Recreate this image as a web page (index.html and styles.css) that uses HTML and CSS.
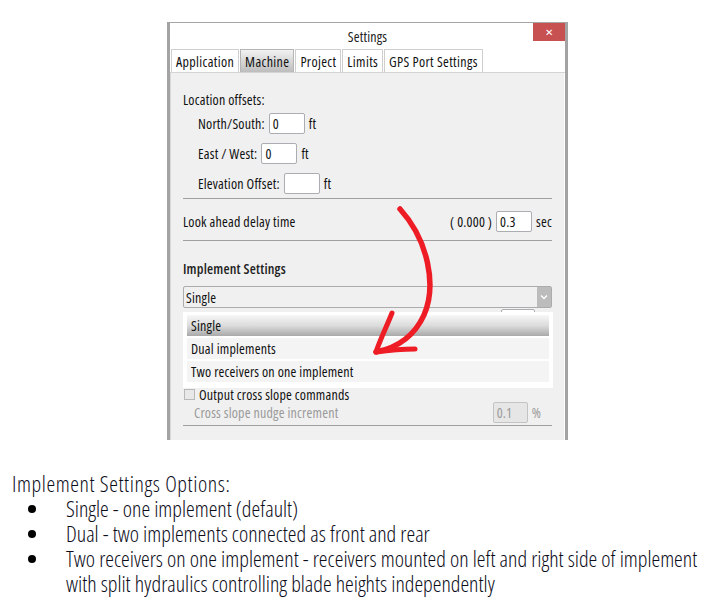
FILE: index.html
```html
<!DOCTYPE html>
<html>
<head>
<meta charset="utf-8">
<link rel="stylesheet" href="styles.css">
</head>
<body>
<div class="page">
  <div class="window">
    <div class="titlebar">
      <span class="title">Settings</span>
      <span class="close">✕</span>
    </div>
    <div class="tabs">
      <div class="tab">Application</div>
      <div class="tab active">Machine</div>
      <div class="tab">Project</div>
      <div class="tab">Limits</div>
      <div class="tab">GPS Port Settings</div>
    </div>
    <div class="panel">
      <div class="group-label">Location offsets:</div>
      <div class="field"><span>North/South:</span><span class="input">0</span><span>ft</span></div>
      <div class="field"><span>East / West:</span><span class="input">0</span><span>ft</span></div>
      <div class="field"><span>Elevation Offset:</span><span class="input"></span><span>ft</span></div>
      <div class="sep sep-1"></div>
      <div class="row lookahead">
        <span>Look ahead delay time</span>
        <span class="row-right"><span>( 0.000 )</span><span class="input">0.3</span><span>sec</span></span>
      </div>
      <div class="sep sep-2"></div>
      <div class="section-title">Implement Settings</div>
      <div class="select-wrap">
        <div class="select"><span>Single</span><span class="select-btn"><svg width="8" height="6" viewBox="0 0 8 6"><path d="M1 1.5 L4 4.5 L7 1.5" fill="none" stroke="#fff" stroke-width="1.4"/></svg></span></div>
        <div class="hidden-row"><span class="input hidden-input"></span></div>
        <ul class="dropdown">
          <li class="item selected">Single</li>
          <li class="item">Dual implements</li>
          <li class="item">Two receivers on one implement</li>
        </ul>
      </div>
      <div class="check-row"><span class="checkbox"></span><span>Output cross slope commands</span></div>
      <div class="row disabled">
        <span class="nudge-label">Cross slope nudge increment</span>
        <span class="row-right nudge-right"><span class="input disabled-input">0.1</span><span>%</span></span>
      </div>
      <div class="sep sep-3"></div>
    </div>
  </div>
  <svg class="annotation" width="704" height="613" viewBox="0 0 704 613">
    <path d="M400 209 C 428 240 437 285 424 315 C 414 337 396 348 376 352" fill="none" stroke="#ee1c24" stroke-width="5.5" stroke-linecap="round"/>
    <path d="M392 313 C 386 328 380 340 376 352 C 390 350 402 349 415 349" fill="none" stroke="#ee1c24" stroke-width="5" stroke-linecap="round" stroke-linejoin="round"/>
  </svg>
  <div class="notes">
    <p class="notes-title">Implement Settings Options:</p>
    <ul class="notes-list">
      <li>Single - one implement (default)</li>
      <li>Dual - two implements connected as front and rear</li>
      <li>Two receivers on one implement - receivers mounted on left and right side of implement<br>with split hydraulics controlling blade heights independently</li>
    </ul>
  </div>
</div>
</body>
</html>
```

FILE: styles.css
```css
* { box-sizing: border-box; }
html, body { margin: 0; padding: 0; background: #fff; }
.page { position: relative; width: 704px; height: 613px; overflow: hidden; }

.window {
  margin: 22px 0 0 167px;
  width: 401px;
  height: 418px;
  background: #fff;
  border-top: 1px solid #a6a6a6;
  border-left: 3px solid #a3a3a3;
  border-right: 3px solid #a3a3a3;
  font-family: "Open Sans", "Noto Sans", sans-serif;
  font-stretch: 75%;
  font-size: 14px;
  letter-spacing: 0.2px;
  color: #111;
  display: flex;
  flex-direction: column;
}
.titlebar {
  height: 26px;
  display: flex;
  justify-content: center;
  align-items: center;
  position: relative;
}
.title { color: #222; padding-top: 1px; }
.close {
  position: absolute;
  right: 0; top: 0;
  width: 32px; height: 18px;
  background: #c75050;
  color: #fff;
  font-size: 10px;
  letter-spacing: 0;
  display: flex; align-items: center; justify-content: center;
}
.tabs {
  display: flex;
  height: 24px;
  padding-left: 1px;
  align-items: flex-end;
  border-bottom: 1px solid #d4d4d4;
}
.tab {
  height: 23px;
  padding: 0 4px;
  margin-right: 1px;
  border: 1px solid #cfcfcf;
  border-bottom: none;
  background: #fff;
  letter-spacing: 0.35px;
  display: flex; align-items: center;
}
.tab.active {
  background: linear-gradient(#f2f2f2, #bdbdbd);
  border-color: #b5b5b5;
}
.panel {
  flex: 1;
  margin-right: 1px;
  background: #f0f0f0;
  border-left: 1px solid #d8d8d8;
  padding: 19px 12px 0 12px;
  display: flex;
  flex-direction: column;
}
.group-label { line-height: 16px; }
.field {
  display: flex; align-items: center; gap: 4px;
  height: 21px;
  margin-top: 9px;
  padding-left: 15px;
}
.group-label + .field { margin-top: 5px; }
.input {
  display: inline-flex; align-items: center;
  width: 36px; height: 21px;
  background: #fff;
  border: 1px solid #abadb3;
  border-radius: 2px;
  padding-left: 3px;
}
.sep { height: 1px; background: #a0a0a0; }
.sep-1 { margin-top: 4px; }
.row { display: flex; justify-content: space-between; align-items: center; height: 21px; }
.row-right { display: flex; align-items: center; gap: 4px; }
.lookahead { margin-top: 12px; }
.sep-2 { margin-top: 8px; }
.section-title { line-height: 16px; margin-top: 20px; font-weight: 600; color: #222; }
.select-wrap { position: relative; margin-top: 9px; }
.select {
  height: 22px;
  border: 1px solid #acacac;
  border-radius: 2px;
  background: #f0f0f0;
  display: flex; align-items: center; justify-content: space-between;
  padding-left: 2px;
}
.select-btn {
  width: 14px; height: 20px;
  background: #bcbcbc;
  display: flex; align-items: center; justify-content: center;
}
.hidden-row { height: 79px; display: flex; justify-content: flex-end; padding-right: 17px; padding-top: 1px; }
.hidden-input { width: 34px; }
.dropdown {
  position: absolute;
  left: 0; top: 26px;
  width: 370px; height: 76px;
  margin: 0; padding: 3px 4px 0 4px;
  list-style: none;
  background: #fff;
  display: flex; flex-direction: column; gap: 2px;
}
.item {
  height: 21px;
  background: #f4f4f4;
  padding-left: 4px;
  display: flex; align-items: center;
}
.item.selected { background: linear-gradient(#f7f7f7 0%, #dcdcdc 50%, #a9a9a9 100%); }
.check-row { display: flex; align-items: center; gap: 4px; height: 14px; padding-left: 1px; }
.checkbox { width: 11px; height: 11px; border: 1px solid #b8b8b8; background: #e8e8e8; }
.disabled { color: #9a9a9a; margin-top: 1px; }
.nudge-label { padding-left: 11px; }
.nudge-right { padding-right: 11px; }
.disabled-input { width: 35px; background: #e6e6e6; border-color: #c3c3c3; color: #9a9a9a; }
.sep-3 { margin-top: 2px; }

.annotation { position: absolute; left: 0; top: 0; pointer-events: none; }

.notes {
  margin-top: 31px;
  font-family: "Open Sans", sans-serif;
  font-stretch: 75%;
  font-weight: 300;
  font-size: 22px;
  line-height: 25px;
  color: #0d0d1a;
}
.notes-title { margin: 0 0 0 12px; letter-spacing: 0.6px; }
.notes-list { margin: 0; padding: 0 0 0 66px; white-space: nowrap; }
.notes-list li { list-style: none; position: relative; }
.notes-list li::before {
  content: "";
  position: absolute;
  left: -38px; top: 9px;
  width: 8px; height: 8px;
  border-radius: 50%;
  background: #000;
}
```
